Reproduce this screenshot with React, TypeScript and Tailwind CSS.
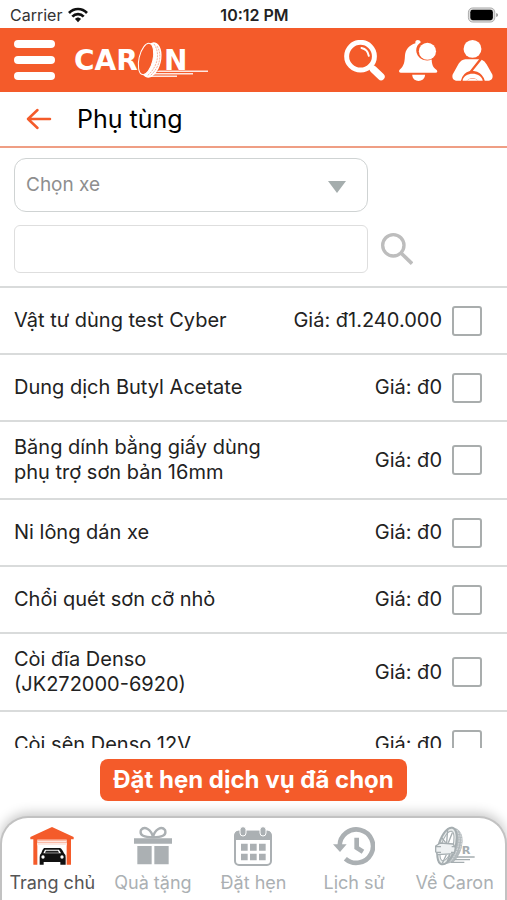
import type { ReactNode } from "react";

const parts = [
  { name: "Vật tư dùng test Cyber", price: "1.240.000" },
  { name: "Dung dịch Butyl Acetate", price: "0" },
  { name: "Băng dính bằng giấy dùng phụ trợ sơn bản 16mm", price: "0" },
  { name: "Ni lông dán xe", price: "0" },
  { name: "Chổi quét sơn cỡ nhỏ", price: "0" },
  { name: "Còi đĩa Denso\n(JK272000-6920)", price: "0" },
  { name: "Còi sên Denso 12V", price: "0" },
];

function StatusBar() {
  return (
    <div className="grid h-7 shrink-0 grid-cols-3 items-center pt-0.5 pr-2 pl-2.5 text-base text-[#333]">
      <div className="flex items-center gap-1.5">
        <span>Carrier</span>
        <svg className="h-4 w-5" viewBox="0 0 60 46" fill="none" stroke="#111" strokeWidth="8" aria-hidden="true">
          <path d="M3 17C18 1 42 1 57 17" />
          <path d="M13 28C22 18 38 18 47 28" />
          <path d="M21 35C26 29 34 29 39 35L30 45Z" fill="#111" stroke="none" />
        </svg>
      </div>
      <span className="text-center text-base font-semibold text-[#222]">10:12 PM</span>
      <svg className="h-4 w-8 justify-self-end" viewBox="0 0 33 17" aria-hidden="true">
        <rect x="1" y="1" width="28" height="15" rx="4.500" fill="#ddd" stroke="#aaa" />
        <rect x="3" y="3" width="24" height="11" rx="2.500" fill="#000" />
        <path d="M30.500 6.500v4q2-.5 2-2t-2-2Z" fill="#999" />
      </svg>
    </div>
  );
}

function Logo() {
  return (
    <svg className="h-10 w-[136px]" viewBox="0 0 136 40" role="img" aria-label="Caron">
      <g fill="#fff" fontFamily="'DejaVu Sans'" fontWeight="700">
        <text x="1" y="30" fontSize="28">CAR</text>
        <text x="91" y="30" fontSize="28">N</text>
      </g>
      <ellipse cx="78" cy="20" rx="10" ry="18" transform="rotate(13 78 20)" fill="#fff" />
      <ellipse cx="73" cy="19" rx="7" ry="16" transform="rotate(13 73 19)" fill="#f45b2a" />
      <ellipse cx="73" cy="19" rx="7" ry="16" transform="rotate(13 73 19)" fill="none" stroke="#fff" strokeWidth="1" />
      <g fill="none" stroke="#f9b19b" strokeWidth="1" strokeDasharray="2 1">
        <path d="M81 4C88 14 84 28 74 36" />
        <path d="M84 6C90 16 86 28 77 36" />
      </g>
      <path d="M86 30.500h49v1.500H83ZM82 33h38v1.500H80ZM78 35.500h26v1.500H75Z" fill="#fff" opacity=".85" />
    </svg>
  );
}

function Header() {
  return (
    <header className="flex h-16 shrink-0 items-center justify-between bg-[#f45b2a] px-3.5">
      <div className="flex items-center gap-[18px]">
        <button aria-label="Menu" className="flex w-[41px] flex-col gap-2">
          <span className="h-2 rounded-full bg-white" />
          <span className="h-2 rounded-full bg-white" />
          <span className="h-2 rounded-full bg-white" />
        </button>
        <Logo />
      </div>
      <div className="flex items-center gap-[13px]">
        <button aria-label="Tìm kiếm">
          <svg className="size-[41px]" viewBox="0 0 124 124" fill="none" stroke="#fff" strokeLinecap="round">
            <circle cx="50" cy="49" r="42" strokeWidth="15" />
            <path d="M53 24Q72 28 75 48" strokeWidth="6" />
            <path d="M79 78L87 86" strokeWidth="12" />
            <path d="M89 89L112 111" strokeWidth="22" />
          </svg>
        </button>
        <button aria-label="Thông báo">
          <svg className="size-[41px]" viewBox="0 0 124 124" fill="#fff">
            <path d="M53 10C49-1 66-4 69 7C55 16 52 31 58 43C65 59 84 66 102 59C102 74 106 83 117 91Q122 99 113 99H8Q0 97 5 90C19 78 20 66 21 48C22 30 33 16 53 10Z" />
            <circle cx="89" cy="34" r="26" />
            <path d="M43 105H82C80 130 44 130 43 105Z" />
          </svg>
        </button>
        <button aria-label="Tài khoản">
          <svg className="size-[41px]" viewBox="0 0 124 124" fill="#fff">
            <circle cx="62" cy="27" r="27" />
            <path d="M40 58H82L54 94Q33 99 27 123H12Q-2 120 2 104L20 72Q28 59 40 58Z" />
            <path d="M90 60Q99 63 105 74L122 104Q126 120 112 123H99Q94 104 76 96L63 93Z" />
            <path d="M32 123C36 95 88 95 93 123H80Q62 107 44 123Z" />
            <path d="M44 123Q62 110 80 123Z" />
          </svg>
        </button>
      </div>
    </header>
  );
}

function Filters() {
  return (
    <form className="flex shrink-0 flex-col gap-[13px] px-3.5 pt-2.5 pb-[13px]" onSubmit={(e) => e.preventDefault()}>
      <div className="relative w-[74%]">
        <select
          aria-label="Chọn xe"
          className="h-[54px] w-full appearance-none rounded-xl border border-[#cfd3d3] bg-white px-[11px] text-[19px] text-[#8e8e8e]"
        >
          <option>Chọn xe</option>
        </select>
        <svg className="pointer-events-none absolute top-[23px] right-[22px] h-3 w-[18px]" viewBox="0 0 18 12" fill="#a5adad" aria-hidden="true">
          <path d="M0 0H18L9 12Z" />
        </svg>
      </div>
      <div className="flex items-center gap-[13px]">
        <input aria-label="Tên phụ tùng" type="text" className="h-12 w-[74%] rounded-md border border-[#dedede] bg-white px-3 text-lg" />
        <button aria-label="Tìm phụ tùng">
          <svg className="size-8" viewBox="0 0 96 96" fill="none" stroke="#bdbdbd">
            <circle cx="37" cy="37" r="32" strokeWidth="10" />
            <path d="M60 60L93 92" strokeWidth="11" />
          </svg>
        </button>
      </div>
    </form>
  );
}

function PartRow({ name, price }: { name: string; price: string }) {
  return (
    <li className="border-t-2 border-[#d9dbdb]">
      <label className="flex min-h-[65px] items-center gap-2.5 py-[13px] pr-[25px] pl-3.5 text-[20px] leading-[25px]">
        <span className="min-w-0 flex-1">
          <span className="block max-w-[260px] whitespace-pre-line">{name}</span>
        </span>
        <span className="whitespace-nowrap">Giá: đ{price}</span>
        <input type="checkbox" className="size-[30px] shrink-0 appearance-none rounded-[3px] border-2 border-[#a9adad] bg-white checked:bg-[#f45b2a]" />
      </label>
    </li>
  );
}

function GarageIcon() {
  return (
    <svg className="h-10 w-11" viewBox="0 0 132 120" aria-hidden="true">
      <path d="M66 3L131 33V40H123V116H110V51H22V116H10V40H1V33Z" fill="#f45b2a" />
      <path d="M22 41H110V58H22Z" fill="#fff" />
      <path d="M22 41H110V44H22ZM22 47H110V50H22ZM22 53H110V55H22Z" fill="#f9a58a" />
      <path d="M42 66H90Q96 68 102 82Q108 86 107 95V116H91V108H41V116H29V94Q28 87 34 81Q37 70 42 66Z" fill="#111" />
      <path d="M45 71H87L93 82H40Z" fill="#fff" />
      <path d="M48 74H84L87 80H45Z" fill="#222" />
      <circle cx="39" cy="93" r="5" fill="#fff" />
      <circle cx="96" cy="93" r="5" fill="#fff" />
    </svg>
  );
}

function GiftIcon() {
  return (
    <svg className="h-10 w-10" viewBox="0 0 120 120" aria-hidden="true" fill="#abb0b3">
      <path d="M3 37H117V53H3ZM13 60H56V115H13ZM64 60H107V115H64Z" />
      <path d="M60 34C35 34 18 29 24 12C34-1 55 9 60 34C65 9 86-1 96 12C102 29 85 34 60 34Z" fill="none" stroke="#abb0b3" strokeWidth="7" />
    </svg>
  );
}

function CalendarIcon() {
  return (
    <svg className="h-10 w-10" viewBox="0 0 120 120" aria-hidden="true" fill="#abb0b3">
      <rect x="6" y="17" width="108" height="100" rx="12" fill="none" stroke="#abb0b3" strokeWidth="6" />
      <path d="M5 42V25Q6 14 17 14H103Q114 15 115 25V42Z" />
      <g stroke="#fff" strokeWidth="3">
        <rect x="21" y="2" width="18" height="28" rx="9" />
        <rect x="81" y="2" width="18" height="28" rx="9" />
      </g>
      <path d="M24 53H44V74H24ZM51 53H71V74H51ZM78 53H98V74H78ZM24 83H44V103H24ZM51 83H71V103H51ZM78 83H98V103H78Z" />
    </svg>
  );
}

function HistoryIcon() {
  return (
    <svg className="h-10 w-[42px]" viewBox="0 0 126 120" aria-hidden="true" fill="none" stroke="#abb0b3">
      <path d="M20 60A50 50 0 1 1 37 98" strokeWidth="14" />
      <path d="M0 55H41L21 78Z" fill="#abb0b3" stroke="none" />
      <path d="M71 35V65L90 77" strokeWidth="14" />
    </svg>
  );
}

function TyreIcon() {
  return (
    <svg className="h-10 w-10" viewBox="0 0 120 120" aria-hidden="true" fill="none" stroke="#a5adb0">
      <path d="M48 2L66 8Q84 20 83 46Q80 86 56 108L26 116L43 90Z" fill="#b3babd" stroke="none" />
      <ellipse cx="36" cy="60" rx="25" ry="57" transform="rotate(17 36 60)" fill="#e9ecec" strokeWidth="6" />
      <ellipse cx="36" cy="60" rx="17" ry="46" transform="rotate(17 36 60)" fill="#fff" strokeWidth="3" />
      <path d="M2 60L16 51L54 54L61 65L58 83L8 86L2 77Z" fill="#eef1f2" strokeWidth="4" />
      <path d="M2 62H18M50 62H60M4 79H18M48 79H58M38 8L35 51M20 35L32 50M52 20L40 50M34 86L22 112M45 86L37 105" strokeWidth="4" />
      <path d="M66 12Q78 36 68 66T44 108M75 20Q84 46 74 72" stroke="#dfe2e4" strokeWidth="3" strokeDasharray="5 3" />
      <text x="80" y="83" fontFamily="'DejaVu Sans'" fontWeight="700" fontSize="34" fill="#a5adb0" stroke="none">R</text>
      <path d="M66 93H119M58 101H105M48 109H88" strokeWidth="4" />
    </svg>
  );
}

const tabs: { label: string; icon: ReactNode; active?: boolean }[] = [
  { label: "Trang chủ", icon: <GarageIcon />, active: true },
  { label: "Quà tặng", icon: <GiftIcon /> },
  { label: "Đặt hẹn", icon: <CalendarIcon /> },
  { label: "Lịch sử", icon: <HistoryIcon /> },
  { label: "Về Caron", icon: <TyreIcon /> },
];

function TabBar() {
  return (
    <nav className="grid shrink-0 grid-cols-5 rounded-t-[28px] border-x-2 border-t-2 border-[#c2c2c2] bg-white pt-2 pb-[5px] shadow-[0_-3px_12px_rgba(0,0,0,0.22)]">
      {tabs.map((tab) => (
        <a
          key={tab.label}
          href="#"
          aria-current={tab.active ? "page" : undefined}
          className={`flex flex-col items-center gap-[5px] text-[18px] leading-6 whitespace-nowrap ${tab.active ? "text-[#555]" : "text-[#abb0b3]"}`}
        >
          {tab.icon}
          {tab.label}
        </a>
      ))}
    </nav>
  );
}

export default function App() {
  return (
    <div className="flex h-screen flex-col overflow-hidden bg-white font-['Inter','Liberation_Sans',sans-serif] text-[#222]">
      <StatusBar />
      <Header />
      <div className="flex h-14 shrink-0 items-center gap-[25px] border-b-2 border-[#ef9e84] px-[26px]">
        <button aria-label="Quay lại">
          <svg className="h-[22px] w-[26px]" viewBox="0 0 26 22" fill="none" stroke="#f45b2a" strokeWidth="2.500" strokeLinecap="round" strokeLinejoin="round">
            <path d="M11.500 2L2 11L11.500 20M2 11H24" />
          </svg>
        </button>
        <h1 className="pt-0.5 text-[25px] text-black">Phụ tùng</h1>
      </div>
      <Filters />
      <ul className="min-h-0 flex-1 overflow-y-auto [scrollbar-width:none]">
        {parts.map((part) => (
          <PartRow key={part.name} name={part.name} price={part.price} />
        ))}
      </ul>
      <div className="flex shrink-0 justify-center pt-[11px] pb-[15px]">
        <button className="h-[42px] rounded-lg bg-[#f45b2a] px-[13px] text-[24px] font-bold whitespace-nowrap text-white">
          Đặt hẹn dịch vụ đã chọn
        </button>
      </div>
      <TabBar />
    </div>
  );
}
